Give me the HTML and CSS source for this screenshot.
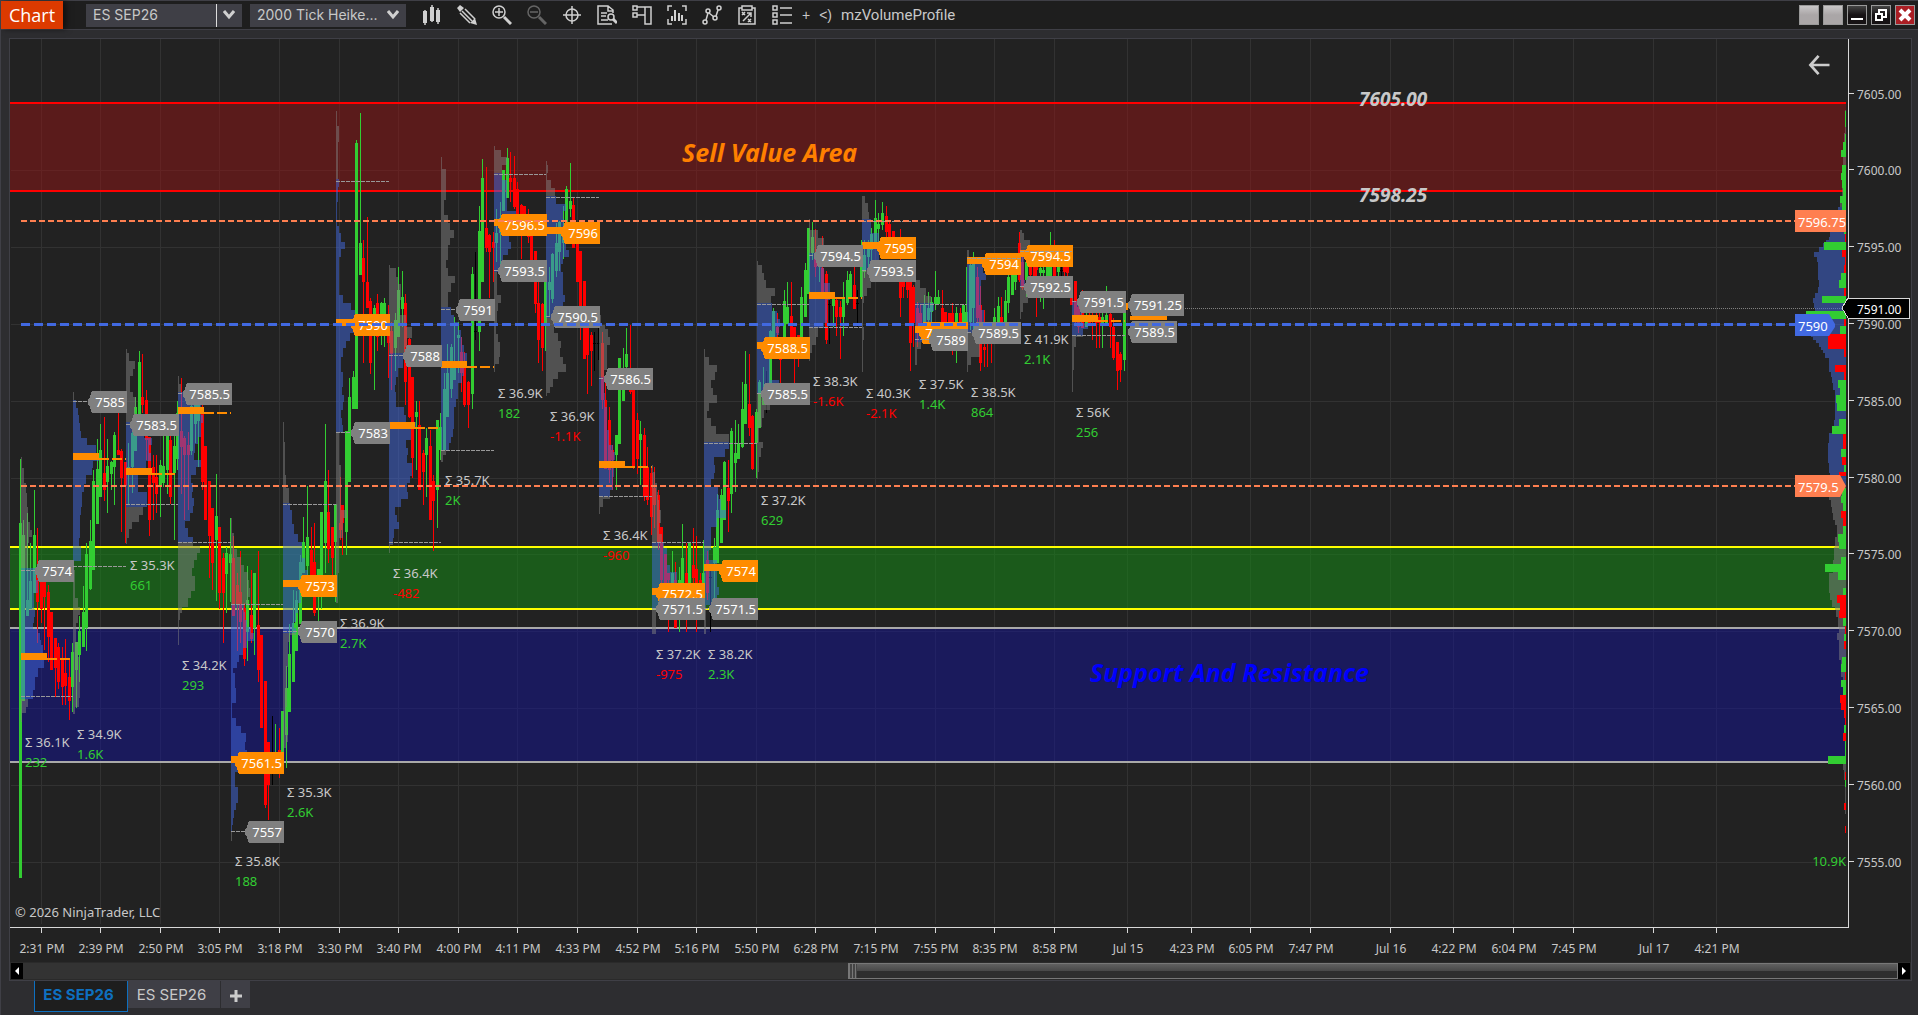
FILE: index.html
```html
<!DOCTYPE html>
<html lang="en">
<head>
<meta charset="utf-8">
<title>Chart - ES SEP26</title>
<link rel="stylesheet" href="styles.css">
</head>
<body>
<header class="bar">
  <h1 class="brand">Chart</h1>
  <div class="combo combo-split">
    <select aria-label="Instrument"><option>ES SEP26</option></select>
    <svg class="chev" viewBox="0 0 12 10"><path d="M1 1l5 6 5-6"/></svg>
  </div>
  <div class="combo">
    <select aria-label="Interval"><option>2000 Tick Heike...</option></select>
    <svg class="chev" viewBox="0 0 12 10"><path d="M1 1l5 6 5-6"/></svg>
  </div>
  <nav class="tools" aria-label="Chart tools">
    <button aria-label="Chart style"><svg viewBox="0 0 20 20"><path class="f" d="M1 6h4v12H1zM8 2h4v14H8zM14 5h4v12h-4z"/><path d="M3 5v15M10 0v17M16 3v16"/></svg></button>
    <button aria-label="Drawing tools"><svg viewBox="0 0 20 20"><path class="f" d="M3 0l4 3-4 4-3-4zM20 20l-7-2 5-5z"/><path d="M3 8l10 10M5 6l10 10M8 4l10 10"/></svg></button>
    <button aria-label="Zoom in"><svg viewBox="0 0 20 20"><circle cx="7" cy="7" r="6"/><path d="M7 3v8M3 7h8"/><path class="w" d="M12 12l7 7"/></svg></button>
    <button class="off" aria-label="Zoom out" disabled><svg viewBox="0 0 20 20"><circle cx="7" cy="7" r="6"/><path d="M3 7h8"/><path class="w" d="M12 12l7 7"/></svg></button>
    <button aria-label="Crosshair"><svg viewBox="0 0 20 20"><circle cx="10" cy="10" r="6"/><path d="M10 1v18M1 10h18"/></svg></button>
    <button aria-label="Data box"><svg viewBox="0 0 20 20"><path d="M15 19H1V1h10l5 4v3M11 1v5h5M4 8h6M4 11h5M4 15h7"/><circle cx="14" cy="12" r="3"/><path class="w" d="M16 14l4 4"/></svg></button>
    <button aria-label="Chart trader"><svg viewBox="0 0 20 20"><path d="M1 1h4v4H1zM1 8h4v4H1zM5 2h14v17h-6V2M5 10h8"/></svg></button>
    <button aria-label="Indicators"><svg viewBox="0 0 20 20"><path d="M1 6V1h4M15 1h4v5M1 14v5h4M15 19h4v-5"/><path class="b" d="M5 16v-5M8 16V5M12 16V8M15 16v-6"/></svg></button>
    <button aria-label="Strategies"><svg viewBox="0 0 20 20"><circle cx="3" cy="17" r="2"/><circle cx="6" cy="6" r="2"/><circle cx="13" cy="13" r="2"/><circle cx="17" cy="3" r="2"/><path d="M4 15l2-7M7 8l5 4M14 11l2-6"/></svg></button>
    <button aria-label="Properties"><svg viewBox="0 0 20 20"><path d="M5 3H2v16h16V3h-3M5 1h10v4H5zM5 7l3 3M8 7l-3 3M11 14l3 3M14 14l-3 3M6 16l8-8M10 8h4v4"/></svg></button>
    <button aria-label="Data series"><svg viewBox="0 0 20 20"><path d="M1 1h4v4H1zM1 8h4v4H1zM1 15h4v4H1zM8 3h12M8 10h12M8 18h12"/></svg></button>
  </nav>
  <div class="links">
    <button aria-label="Add">+</button>
    <button aria-label="Link">&lt;)</button>
    <button class="name">mzVolumeProfile</button>
  </div>
  <div class="win">
    <button class="blank" aria-label="Instrument link"></button>
    <button class="blank" aria-label="Interval link"></button>
    <button aria-label="Minimize"><svg viewBox="0 0 18 18"><path class="w" d="M3 13h12"/></svg></button>
    <button aria-label="Restore"><svg viewBox="0 0 18 18"><path class="w" d="M7 7V4h7v7h-3M4 8h6v6H4z"/></svg></button>
    <button class="close" aria-label="Close"><svg viewBox="0 0 18 18"><path class="x" d="M4 4l10 10M14 4L4 14"/></svg></button>
  </div>
</header>
<main class="frame">
  <section class="stage">
    <svg id="chart" role="img" aria-label="ES SEP26 volume profile chart"></svg>
    <button class="back" aria-label="Back"><svg viewBox="0 0 24 22"><path d="M23 11H2M11 1L2 11l9 10"/></svg></button>
  </section>
  <div class="scroll">
    <button aria-label="Scroll left"><svg viewBox="0 0 12 16"><path d="M8 4v8L4 8z"/></svg></button>
    <div class="track"><div class="thumb"></div></div>
    <button aria-label="Scroll right"><svg viewBox="0 0 12 16"><path d="M4 4v8l4-4z"/></svg></button>
  </div>
</main>
<footer class="tabs">
  <button class="tab on">ES SEP26</button>
  <button class="tab">ES SEP26</button>
  <button class="tab add" aria-label="New tab"><svg viewBox="0 0 14 14"><path d="M7 1v12M1 7h12"/></svg></button>
</footer>
<script src="chart.js"></script>
</body>
</html>
```
FILE: styles.css
```css
* { box-sizing: border-box; }
body {
  margin: 0;
  height: 100vh;
  display: flex;
  flex-direction: column;
  overflow: hidden;
  background: #2d2d30;
  border-left: 1px solid #3f3f46;
  color: #c8c8c8;
  font-family: "Noto Sans", "Open Sans", sans-serif;
}
button, select { font: inherit; color: inherit; border: 0; padding: 0; margin: 0; background: none; }

.bar {
  flex: none;
  display: flex;
  align-items: center;
  height: 30px;
  padding-right: 3px;
  background: #1e1e1e;
  border-top: 1px solid #3f3f46;
  border-bottom: 1px solid #3f3f46;
}
.brand {
  margin: 0 23px 0 0;
  width: 62px;
  line-height: 28px;
  text-align: center;
  background: #dc3a00;
  color: #fff;
  font-size: 18px;
  font-weight: 500;
  box-shadow: 3px 0 6px #0008;
  font-family: "Open Sans", sans-serif;
}
.combo {
  display: flex;
  align-items: center;
  position: relative;
  width: 156px;
  height: 23px;
  margin-right: 8px;
  background: #3f3f46;
}
.combo select {
  appearance: none;
  width: 100%;
  height: 23px;
  padding: 0 26px 1px 7px;
  font-family: Inter, sans-serif;
  font-size: 14px;
}
.combo-split::after {
  content: "";
  position: absolute;
  right: 25px;
  width: 1px;
  height: 23px;
  background: #ddd;
}
.chev { position: absolute; right: 7px; width: 12px; height: 10px; pointer-events: none; }
.chev path { fill: none; stroke: #d0d0d0; stroke-width: 3; }
.tools { display: flex; align-items: center; gap: 15px; margin-left: 8px; }
.tools button { width: 20px; height: 22px; }
.tools svg { display: block; width: 20px; height: 20px; }
.tools path, .tools circle { fill: none; stroke: #d0d0d0; stroke-width: 1.5; }
.tools .f { fill: #d0d0d0; stroke: none; }
.tools .w { stroke-width: 3; }
.tools .b { stroke-width: 2; }
.tools .off { opacity: .4; }
.links { display: flex; align-items: center; gap: 9px; margin-left: 10px; font: 14px "Liberation Sans", sans-serif; }
.links .name { font: 15px Roboto, sans-serif; }
.win { display: flex; gap: 4px; margin-left: auto; }
.win button {
  width: 20px;
  height: 20px;
  border: 1px solid #999;
  background: linear-gradient(#444, #161214 50%);
}
.win .blank { background: linear-gradient(#c8c6c7, #aaa6a7 50%); }
.win .close { background: #aa1e24; }
.win svg { display: block; width: 18px; height: 18px; }
.win path { fill: none; stroke: #fff; }
.win .w { stroke-width: 2; }
.win .x { stroke-width: 4; }

.frame {
  flex: 1;
  min-height: 0;
  display: flex;
  flex-direction: column;
  margin: 8px 6px 0 8px;
  border: 1px solid #3f3f46;
}
.stage { flex: 1; min-height: 0; position: relative; background: #222; }
#chart { display: block; width: 100%; height: 100%; }
.back { position: absolute; top: 16px; right: 80px; width: 23px; height: 20px; }
.back svg { display: block; width: 23px; height: 20px; }
.back path { fill: none; stroke: #ccc; stroke-width: 3; }

.scroll { display: flex; height: 18px; padding: 1px; background: #2a2a2a; }
.scroll button { width: 12px; height: 16px; background: #000; }
.scroll svg { display: block; width: 12px; height: 16px; fill: #fff; }
.track { flex: 1; display: flex; background: #333; }
.thumb {
  width: 56%;
  margin-left: auto;
  border: 1px solid #777;
  background: repeating-linear-gradient(90deg, #777 0 1px, #444 1px 3px) left / 8px 100% no-repeat, linear-gradient(#606060, #484848 50%, #2e2e2e 50%);
}

.tabs { flex: none; display: flex; align-items: flex-start; height: 34px; padding-left: 33px; }
.tab {
  width: 92px;
  height: 27px;
  padding-right: 5px;
  margin-right: 1px;
  background: #3f3f46;
  font-family: Inter, sans-serif;
  font-size: 15px;
}
.tab.on {
  width: 94px;
  height: 31px;
  padding-bottom: 4px;
  margin-right: 0;
  border: 1px solid #0e70c0;
  border-top: 0;
  background: #1e1e1e;
  color: #0e70c0;
  font-weight: 700;
}
.tab.add { width: 29px; padding: 0; }
.tab.add svg { width: 14px; height: 14px; vertical-align: middle; }
.tab.add path { stroke: #ccc; stroke-width: 3; }

.shape { shape-rendering: crispEdges; }
.axis { stroke: #d8d8d8; fill: none; }
.txt, .price { font-size: 12px; fill: #c8c8c8; }
.sum { font-size: 13px; fill: #c8c8c8; }
.tag { font-size: 13px; fill: #fff; }
.up { fill: #32cd32; }
.down { fill: #ff0000; }
.now { fill: #fff; }
.note { font-weight: 700; font-style: italic; }
.note-l { font-size: 25px; }
.note-s { font-size: 19px; fill: #c8c8c8; }
```
FILE: chart.js
```js
// Samples are stored in thirds of a pixel, relative to each group's origin.
const candleGroups = [
  { ox: 0, oy: 340, d: `61 g 357 1613 549 1613;71 g 540 1083 585 1083;82 g 520 828 780 828;91 g 610 808 723 808;103 g 450 760 585 760;112 r 563 908 700 785;124 r 700 850 718 808;133 r 718 930 720 770;145 r 735 965 757 890;154 r 815 990 815 990;166 r 893 1070 893 985;176 r 908 1048 920 1025;187 r 920 1095 960 1040;196 r 897 1095 1000 1037;208 r 960 1140 1010 1083;217 g 908 1115 935 1040;229 g 905 1105 905 990;238 g 828 1025 873 945;250 g 738 920 815 920;259 g 610 933 642 863;271 g 540 750 603 748;280 g 390 690 422 690;292 g 297 553 388 553;301 g 252 472 330 470;313 r 232 482 398 450;322 g 298 520 377 427;334 g 362 450 365 402;343 g 275 495 285 382;355 r 215 345 330 345;364 r 328 575 332 413;377 r 365 608 365 437;386 g 310 495 380 400;397 g 250 460 280 380;406 g 172 333 200 333;418 g 32 250 66 250;427 r 43 220 172 195;439 r 150 360 180 300;448 r 290 588 290 540;460 r 345 540 380 430;469 r 345 518 410 463;481 g 360 530 375 437;490 g 285 440 378 430;502 g 285 463 285 390;511 r 285 493 300 470;523 g 283 600 318 400;532 g 182 390 218 357;544 r 113 463 272 322;553 r 287 540 295 345;565 r 275 510 315 345;574 g 190 345 197 333;586 g 190 310 195 252;595 g 190 380 195 243;606 r 195 450 215 425;616 r 318 540 318 540;628 r 423 715 423 588;637 r 505 750 505 668;649 g 402 783 528 600;658 r 562 808 562 758;670 r 640 908 655 758;679 g 622 818 640 703;691 g 535 785 642 668;700 r 588 827 655 827;711 r 700 933 735 795;721 r 632 908 755 845;733 r 790 978 803 958;742 g 678 963 780 877;754 r 690 908 825 898;763 g 698 945 698 865;775 r 632 1025 855 990;784 r 885 1163 885 1163;796 r 1023 1403 1023 1395;805 r 1205 1440 1205 1335;817 k 1128 1335 1300 1303;826 g 1153 1303 1250 1253;838 r 1163 1313 1230 1240;847 g 1113 1235 1113 1235;859 g 978 1285 1045 1185;868 g 852 1115 942 1115;880 g 750 1025 848 1025;889 g 753 933 780 933;901 g 645 853 667 853;910 g 532 700 605 700;922 g 438 715 590 678;934 r 562 715 630 705;943 r 550 827 665 820;955 g 687 843 687 705;964 g 515 808 515 705;976 g 252 700 423 610;985 r 390 670 515 628;997 r 560 710 562 655;1006 g 492 785 492 605;1021 r 412 600 550 570;1028 r 495 645 495 550` },
  { ox: 320, oy: 90, d: `79 g 1022 1395 1022 1325;88 g 865 1175 920 1175;100 g 843 957 860 957;109 g 150 957 158 957;121 g 68 555 458 555;130 r 450 820 503 577;142 r 380 655 577 655;151 r 625 852 632 820;163 g 645 900 655 700;172 r 612 783 640 740;184 g 635 765 640 700;193 g 625 770 640 690;205 r 645 865 700 760;214 r 695 900 723 793;226 g 670 843 690 775;235 g 530 740 600 740;247 g 543 710 622 657;256 r 612 945 640 875;268 r 745 985 747 980;277 r 860 1165 860 1105;289 g 933 1140 965 980;298 r 933 1200 1005 1200;310 r 1080 1245 1090 1147;319 g 1015 1220 1045 1095;331 r 1020 1290 1068 1290;340 r 1155 1383 1173 1233;352 g 990 1315 990 1200;361 g 970 1110 1010 1080;373 g 848 1080 897 1080;382 g 763 980 850 980;394 g 763 925 770 897;403 g 680 870 825 870;415 g 695 850 735 745;424 r 740 905 785 850;433 r 785 950 820 945;445 r 872 1013 875 945;457 g 530 957 552 912;466 k 487 750 722 725;478 g 347 783 423 725;487 g 207 577 263 577;499 r 232 485 413 473;508 r 433 625 435 485;520 r 427 577 457 475;529 g 357 517 430 460;541 g 335 540 385 430;550 g 240 362 240 362;562 g 173 325 203 325;571 r 187 335 263 277;583 r 198 357 265 350;592 r 275 375 297 375;604 r 342 507 345 375;613 r 347 375 347 375;625 r 357 460 375 440;634 r 432 530 432 530;647 r 483 668 483 642;655 r 575 820 640 750;667 r 640 843 642 773;676 g 575 783 575 703;688 g 530 680 575 600;697 g 490 638 492 628;709 g 400 560 460 543;718 g 393 543 395 487;730 g 348 508 425 460;739 g 288 397 298 397;751 g 218 380 333 357;760 r 323 475 345 475;772 r 460 577 460 577;781 r 483 750 483 648;793 r 573 808 573 808;802 r 715 912 715 795;814 r 727 888 735 782;823 k 727 843 760 763;835 k 713 810 760 763` },
  { ox: 600, oy: 200, d: `7 r 397 627 430 600;17 r 530 808 600 808;28 r 620 850 660 810;38 r 735 870 750 780;49 g 705 870 705 765;58 g 473 733 473 733;70 g 443 602 565 602;79 g 383 570 462 500;91 r 375 582 570 575;100 r 565 808 567 800;112 r 640 822 660 778;121 g 663 855 703 720;133 r 683 900 705 890;142 r 742 900 800 900;373 g 787 940 787 940;385 r 790 930 880 900;394 g 690 940 693 883;406 g 660 845 763 790;415 g 672 778 730 778;427 g 545 745 628 740;436 g 452 673 553 673;448 r 463 708 612 685;457 r 645 810 648 808;469 g 627 835 635 730;478 g 540 685 545 685;490 g 500 615 585 615;499 k 513 638 600 603;511 g 390 550 393 550;520 g 325 415 333 415;532 r 338 415 380 400;541 r 475 550 475 480;553 g 270 412 303 412;562 g 245 372 322 372;574 r 245 412 348 412;583 r 380 550 380 412;595 r 405 500 405 412;604 g 262 412 290 412;616 g 190 350 210 350;625 g 83 282 83 282;637 g 65 180 110 160;646 r 87 230 160 200;658 g 160 245 190 200;667 r 107 275 205 275;679 r 213 432 223 420;688 k 300 432 312 315;700 g 290 380 298 318;709 r 293 408 300 352;721 r 303 478 322 352;730 g 245 408 297 352;742 g 213 315 240 310;751 g 213 292 223 292;763 r 200 327 255 327;772 k 270 380 310 313;784 g 120 290 195 290;793 g 120 235 165 215;805 g 120 210 130 170;814 g 85 190 103 150;826 g 0 130 55 130;835 g 38 130 72 88;847 g 5 90 38 75;859 r 17 112 48 95;868 r 62 112 72 112;880 r 92 112 92 112;901 r 87 350 245 293;911 r 240 293 240 260;922 r 240 293 245 270;931 r 240 513 240 430` },
  { ox: 280, oy: 440, d: `1093 r -15 182 -15 167;1103 r 20 195 80 168;1115 r 80 285 100 230;1124 r 80 263 145 195;1135 r 150 330 165 310;1144 r 262 430 262 420;1156 r 343 430 343 430;1165 r 400 575 400 420;1177 g 332 430 400 430;1187 r 365 565 420 563;1198 g 382 577 420 430;1207 g 252 430 353 430;1219 r 308 575 400 430;1228 g 307 430 307 430;1240 r 263 430 375 415;1249 r 288 575 388 430;1261 r 400 480 420 450;1270 g 300 480 400 430;1282 r 333 480 360 460;1291 k 390 577 410 413;1303 g 293 480 320 370;1312 g 163 370 210 370;1324 g 148 310 165 310;1333 g 63 240 67 240;1345 r 60 277 145 183;1354 g -35 220 0 163;1366 g -60 155 40 70` },
  { ox: 780, oy: 180, d: `400 r 315 500 320 430;412 r 365 500 385 440;421 r 375 450 400 440;433 g 345 430 375 430;445 g 335 430 385 420;454 g 350 425 367 397;466 g 272 390 350 373;475 g 330 373 350 373;487 r 330 425 385 425;496 r 395 425 395 425;508 r 400 425 400 425;517 r 368 525 400 425;529 g 380 548 400 425;541 r 385 425 400 425;550 g 375 425 375 425;559 g 260 430 395 430;571 g 250 450 255 425;580 g 215 450 240 385;592 r 262 460 290 415;601 r 318 573 375 550;613 r 390 560 500 510;622 r 480 560 480 490;634 r 488 548 488 490;643 g 385 425 410 425;655 g 350 425 378 425;665 r 350 425 410 425;676 g 330 425 362 425;685 g 280 400 290 370;697 g 278 345 278 345;707 g 275 330 280 307;718 r 155 305 190 300;727 r 230 330 245 325;739 g 225 350 245 300;751 r 240 330 260 285;763 r 230 295 250 290;769 r 255 410 260 270;781 g 255 365 265 280;790 g 255 388 270 280;802 g 255 350 260 290;811 g 155 350 258 290;823 r 180 330 258 290;835 g 240 290 258 275;844 k 250 300 270 273;853 r 240 300 258 275;862 r 250 290 255 280;874 r 350 375 350 375;886 r 302 430 302 420;895 r 360 460 380 440;907 r 330 445 365 445;918 g 395 440 405 440;928 r 395 430 405 430;937 r 390 480 405 420;949 r 400 505 405 430;958 r 400 503 410 430;968 g 395 503 410 430;979 g 318 430 405 430;991 r 395 503 403 440;1000 r 415 540 440 535;1012 r 485 630 487 573;1021 r 515 605 523 570;1033 g 390 573 395 540` }
];

// Volume profiles: origin, left edge, value area (top, bottom), then y,width steps and a closing y.
const profiles = [
  [0, 340, 64, 685, 1077, [350,3,383,10,430,14,460,18,500,22,545,28,570,32,590,25,610,20,685,46,720,50,760,40,808,42,830,38,850,36,868,50,880,56,900,60,915,66,955,68,985,50,1010,42,1050,36,1077,22,1100,15,1120,4,1145]],
  [0, 340, 220, 179, 662, [157,3,179,10,205,14,225,17,248,20,272,25,293,42,315,68,338,78,362,60,385,56,405,40,432,33,455,27,480,28,502,25,525,20,548,22,572,20,595,18,617,24,662,4,690,5,710,6,775,15,800,22,825,16,850,10,905,15,950,18,1000,22,1075,18,1100,6,1122]],
  [0, 340, 379, 245, 500, [27,3,38,10,62,26,86,22,108,13,157,22,172,30,200,28,245,55,295,77,315,68,340,74,363,60,385,36,455,62,500,52,525,40,545,18,568,10,595,3,613]],
  [0, 340, 535, 155, 607, [108,3,132,10,155,30,190,70,225,75,248,70,292,60,312,52,340,48,360,70,382,55,405,40,430,45,455,42,475,48,497,44,520,37,542,22,565,30,590,45,617,66,638,58,660,47,685,42,707,52,730,50,752,38,775,30,800,12,820,6,840,3,915]],
  [0, 340, 694, 793, 1472, [533,3,580,10,627,18,650,30,675,40,697,52,720,55,745,58,770,50,793,40,815,42,840,47,862,60,880,68,903,48,925,36,945,25,965,18,985,6,1000,12,1045,14,1090,3,1135,15,1158,30,1180,45,1205,42,1230,48,1260,40,1297,12,1340,22,1365,20,1390,15,1410,10,1435,5,1455,3,1503]],
  [0, 340, 850, 490, 880, [245,3,305,5,405,10,445,18,490,22,510,26,552,33,582,45,605,56,655,65,690,75,720,50,765,55,790,45,820,38,845,32,865,40,885,20,905,14,980,12,1100,10,1160,12,1185,15,1205,10,1225,4,1270]],
  [320, 90, 49, 268, 1025, [63,3,108,8,132,10,155,5,268,8,292,5,335,4,385,3,408,10,430,16,455,26,478,14,502,10,615,22,638,46,660,58,730,42,752,30,775,20,800,14,845,20,870,22,890,18,915,24,935,20,960,14,983,18,1005,20,1030,8,1125,14,1210,16,1260,34,1285,20,1345,10,1450,6,1540]],
  [320, 90, 208, 790, 1362, [525,3,535,22,560,28,582,36,630,32,655,30,675,50,710,68,745,55,770,48,790,42,835,28,860,22,885,17,905,20,950,45,975,50,995,80,1018,66,1050,52,1075,58,1095,55,1120,68,1158,62,1180,55,1205,57,1227,36,1250,18,1275,24,1295,30,1318,15,1345,12,1365,3,1390]],
  [320, 90, 364, 652, 1081, [200,3,237,14,330,10,375,20,398,28,420,40,443,28,465,20,510,15,535,22,557,43,580,30,605,22,630,20,652,30,675,40,697,52,720,60,740,62,765,70,790,78,812,70,857,62,880,52,905,50,927,45,950,40,975,38,1018,35,1040,30,1060,25,1080,14,1095,5,1115]],
  [320, 90, 523, 249, 545, [168,3,180,20,202,40,225,25,270,40,362,65,430,45,455,52,477,42,495,28,545,8,615,20,638,12,663,10,708,5,732,12,755,18,800,14,823,3,846]],
  [320, 90, 679, 317, 684, [213,3,225,6,248,3,270,14,293,26,317,30,342,60,362,50,387,54,460,60,480,70,500,52,522,45,545,50,570,52,615,56,637,50,660,38,680,28,705,25,730,35,752,45,775,42,800,52,823,60,845,35,868,22,890,12,910,3,917]],
  [600, 200, -3, 530, 890, [345,6,375,19,388,27,410,33,435,25,460,23,510,15,580,17,620,23,690,31,735,41,755,47,780,45,830,43,870,33,897,11,920,4,943]],
  [280, 440, 1117, 305, 510, [75,3,95,10,130,14,155,18,180,22,210,26,250,20,283,30,305,36,325,45,375,55,395,75,470,60,510,12,582]],
  [600, 200, 313, 727, 1222, [447,3,470,14,495,40,517,32,540,20,563,26,585,40,608,14,632,10,655,22,678,35,702,75,748,62,770,30,795,32,820,30,838,22,862,42,885,45,898,50,930,66,955,40,980,20,1050,14,1080,40,1160,46,1185,38,1215,5,1302]],
  [600, 200, 471, 308, 580, [183,3,195,14,218,20,240,26,263,53,287,42,308,45,332,60,357,68,382,65,405,60,475,40,540,66,550,40,585,38,630,22,655,14,680,5,727,17,745,12,770,5,815,4,838]],
  [600, 200, 628, 160, 385, [57,3,90,26,113,44,160,40,205,45,250,62,300,55,370,45,385,28,410,20,435,10,460,3,483]],
  [780, 180, 247, 117, 270, [48,8,70,18,95,22,117,28,160,50,270,26,325,15,348,6,370,3,440,5,480,3,575]],
  [780, 180, 406, 370, 485, [270,3,300,14,325,32,348,48,370,56,392,50,485,18,508,5,555]],
  [780, 180, 562, 232, 460, [210,5,232,45,258,48,278,56,300,42,390,50,460,40,530,12,555,3,575]],
  [780, 180, 720, 213, 318, [150,5,160,12,180,30,205,30,215,12,300,15,320,30,348,24,370,10,395,3,417]],
  [780, 180, 877, 362, 468, [350,4,362,20,385,30,430,48,448,32,470,12,500,5,570,3,635]]
];

// Session starts, shared by tags, value-area lines and volume totals.
const starts = [21,73,126,178,231,283,336,389,441,494,546,599,652,704,757,809,862,915,967,1020,1072,1125];
// [y, dashed tail y or 0] of each session's point of control
const poc = [[653,659],[453,459],[468,474],[407,413],[756,0],[580,0],[319,0],[422,428],[361,367],[219,0],[227,0],[461,467],[588,0],[564,0],[342,0],[292,298],[242,0],[326,0],[257,0],[250,0],[315,321]];
const vaLines = [696,566,504,542,604,504,181,542,450,174,197,496,542,443,304,327,221,304,258,251,335];
// [session, price, highlighted]
const tags = [[0,7574],[1,7585],[2,7583.5],[3,7585.5],[4,7561.5,1],[4,7557],[5,7573,1],[5,7570],[6,7590,1],[6,7583],[7,7588],[8,7591],[9,7596.5,1],[9,7593.5],[10,7596,1],[10,7590.5],[11,7586.5],[12,7572.5,1],[12,7571.5],[13,7574,1],[13,7571.5],[14,7588.5,1],[14,7585.5],[15,7594.5],[16,7595,1],[16,7593.5],[17,7589.5,1],[17,7589],[18,7594,1],[18,7589.5],[19,7594.5,1],[19,7592.5],[20,7591.5]];
const sums = [[747,'36.1K','232'],[739,'34.9K','1.6K'],[570,'35.3K','661'],[670,'34.2K','293'],[866,'35.8K','188'],[797,'35.3K','2.6K'],[628,'36.9K','2.7K'],[578,'36.4K','-482'],[485,'35.7K','2K'],[398,'36.9K','182'],[421,'36.9K','-1.1K'],[540,'36.4K','-960'],[659,'37.2K','-975'],[659,'38.2K','2.3K'],[505,'37.2K','629'],[386,'38.3K','-1.6K'],[398,'40.3K','-2.1K'],[389,'37.5K','1.4K'],[397,'38.5K','864'],[344,'41.9K','2.1K'],[417,'56K','256']];
const times = [[41,'2:31 PM'],[100,'2:39 PM'],[160,'2:50 PM'],[219,'3:05 PM'],[279,'3:18 PM'],[339,'3:30 PM'],[398,'3:40 PM'],[458,'4:00 PM'],[517,'4:11 PM'],[577,'4:33 PM'],[637,'4:52 PM'],[696,'5:16 PM'],[756,'5:50 PM'],[815,'6:28 PM'],[875,'7:15 PM'],[935,'7:55 PM'],[994,'8:35 PM'],[1054,'8:58 PM'],[1127,'Jul 15'],[1191,'4:23 PM'],[1250,'6:05 PM'],[1310,'7:47 PM'],[1390,'Jul 16'],[1453,'4:22 PM'],[1513,'6:04 PM'],[1573,'7:45 PM'],[1653,'Jul 17'],[1716,'4:21 PM']];

// Composite profile at the right edge: y,width steps, then delta bars.
const composite = [150,3,220,5,290,8,385,12,415,18,440,24,515,48,530,52,540,60,550,70,560,80,575,95,590,88,605,84,660,80,680,84,700,92,715,98,730,96,745,94,755,105,775,112,800,105,830,98,840,90,850,82,860,75,870,68,880,62,895,52,920,50,935,46,950,42,970,38,990,34,1040,32,1080,36,1100,42,1120,50,1150,54,1210,52,1240,48,1278,50,1320,46,1340,42,1360,38,1380,32,1395,28,1430,32,1460,36,1500,40,1540,50,1600,48,1620,42,1640,34,1650,30,1670,25,1700,22,1720,26,1740,22,1760,20,1800,15,1850,10,1930,3,2080,3,2110,8,2130,5,2160,3,2262];
const deltas = `153 200 3 g;222 246 3 g;246 270 9 g;270 290 14 g;315 340 12 g;340 360 14 g;360 385 12 g;385 408 10 g;408 430 17 g;430 450 12 g;516 523 5 g;523 546 3 r;546 569 66 g;569 591 12 r;591 615 2 r;615 640 6 r;640 660 15 g;660 684 20 g;684 708 6 r;708 728 72 g;753 776 120 g;776 798 6 r;798 822 18 g;822 867 54 r;867 890 6 r;915 936 33 r;936 960 5 r;960 983 24 g;983 1006 18 g;1006 1030 30 g;1030 1053 27 g;1077 1098 20 g;1098 1121 42 g;1121 1167 9 r;1167 1190 15 g;1190 1215 12 r;1215 1236 6 g;1236 1247 20 r;1285 1307 12 g;1307 1330 15 g;1330 1352 9 g;1352 1373 15 r;1373 1398 9 r;1398 1422 9 g;1422 1445 24 g;1445 1467 21 g;1491 1512 15 g;1512 1535 63 g;1535 1560 24 g;1585 1605 9 g;1605 1628 27 r;1628 1652 18 r;1652 1674 21 r;1674 1698 8 g;1698 1722 3 r;1722 1743 6 g;1743 1767 6 r;1790 1812 12 g;1812 1835 15 g;1835 1860 3 r;1860 1880 15 g;1880 1905 8 g;1905 1928 18 r;1928 1950 15 r;1950 1974 6 r;1974 1996 3 r;1996 2020 6 g;2020 2043 9 r;2043 2088 3 g;2088 2112 54 g;2136 2160 3 r;2160 2182 3 g;2228 2250 6 r;2298 2320 3 r`;

const LEFT = 10, TOP = 39;
const colors = { g: '#32cd32', r: '#ff0000', k: '#000' };
const priceY = p => Math.round(93.6 + (7605 - p) * 15.36);
const rect = (x, y, w, h, f, extra = '') => `<rect class="shape" x="${x}" y="${y}" width="${w}" height="${h}" fill="${f}" ${extra}/>`;
const line = (x1, y1, x2, y2, s, w = 1, extra = '') => {
  const o = w % 2 / 2, v = x1 === x2;
  return `<line class="shape" x1="${v ? x1 + o : x1}" y1="${v ? y1 : y1 + o}" x2="${v ? x2 + o : x2}" y2="${v ? y2 : y2 + o}" stroke="${s}" stroke-width="${w}" ${extra}/>`;
};
const text = (x, y, t, cls, extra = '') => `<text x="${x}" y="${y}" class="${cls}" ${extra}>${t}</text>`;
const dash = d => `stroke-dasharray="${d}"`;

function tag(right, y, label, fill) {
  const w = label.length < 5 ? 35 : label.length < 7 ? 45 : 52, x = right - w;
  return `<path class="shape" fill="${fill}" d="M${x} ${y - 11}H${right}V${y + 11}H${x}l-2-6-2-3v-4l2-3z"/>` +
    text(right - 2, y + 5, label, 'tag', 'text-anchor="end"');
}

function draw() {
  const svg = document.getElementById('chart');
  const axisX = LEFT + svg.clientWidth - 63, axisY = TOP + svg.clientHeight - 35, edge = axisX - 2;
  let s = '';
  for (const [x] of times) s += line(x, TOP, x, axisY - 3, '#323232');
  for (let p = 7600; p >= 7555; p -= 5) s += line(11, priceY(p), edge, priceY(p), '#323232');

  s += rect(10, 103, edge - 10, 88, '#921414', 'opacity=".5"') + line(10, 103, edge, 103, '#f00', 2) + line(10, 191, edge, 191, '#f00', 2);
  s += rect(10, 548, edge - 10, 61, '#148c14', 'opacity=".53"') + line(10, 547, edge, 547, '#ff0', 2) + line(10, 609, edge, 609, '#ff0', 2);
  s += rect(10, 629, edge - 10, 133, '#141492', 'opacity=".52"') + line(10, 628, edge, 628, '#a9a9a9', 2) + line(10, 762, edge, 762, '#a9a9a9', 2);

  for (const g of candleGroups) for (const row of g.d.split(';')) {
    const [x, c, a, b, t, u] = row.split(' ');
    const px = g.ox + Math.floor(x / 3), at = v => g.oy + Math.round(v / 3);
    s += rect(px, at(a), 1, at(b) - at(a), colors[c]) + rect(px - 1, at(t), 3, Math.max(1, at(u) - at(t)), colors[c]);
  }
  for (const [ox, oy, x, va, vb, st] of profiles) {
    const base = ox + Math.round(x / 3), va1 = oy + Math.round(va / 3), vb1 = oy + Math.round(vb / 3);
    for (let i = 0; i + 2 < st.length; i += 2) {
      const y1 = oy + Math.round(st[i] / 3), y2 = oy + Math.round(st[i + 2] / 3), w = Math.round(st[i + 1] / 3);
      const cuts = [y1, ...[va1, vb1].filter(v => v > y1 && v < y2), y2];
      for (let k = 0; k + 1 < cuts.length; k++)
        s += rect(base, cuts[k], w, cuts[k + 1] - cuts[k], cuts[k] >= va1 && cuts[k] < vb1 ? '#4169e1' : '#808080', 'opacity=".5"');
    }
  }
  poc.forEach(([y, tail], i) => {
    s += rect(starts[i], y, 26, 7, '#ff8c00');
    if (tail) s += line(starts[i] + 26, tail, starts[i + 1], tail, '#ff8c00', 2, dash('10 3'));
  });
  s += rect(1125, 303, 3, 7, '#ff8c00') + rect(1130, 316, 37, 4, '#ff8c00');
  for (const [i, p, hot] of tags) {
    const y = priceY(p);
    if (!hot) s += line(starts[i], y, starts[i + 1] - 36, y, '#999', 1, dash('4 1'));
    s += tag(starts[i + 1] + 1, y + 1, String(p), hot ? '#ff8c00' : '#808080');
  }
  s += tag(1184, 305, '7591.25', '#808080') + tag(1177, 332, '7589.5', '#808080');
  vaLines.forEach((y, i) => { s += line(starts[i], y, starts[i + 1], y, '#999', 1, dash('4 1')); });
  sums.forEach(([y, a, b], i) => {
    s += text(starts[i] + 4, y, 'Σ ' + a, 'sum') + text(starts[i] + 4, y + 20, b, b[0] === '-' ? 'sum down' : 'sum up');
  });

  s += line(21, 221, edge - 51, 221, '#ff7f50', 2, dash('6 3')) + line(21, 486, edge - 51, 486, '#ff7f50', 2, dash('6 3'));
  s += line(1185, 308, edge, 308, '#808080', 1, dash('1 1'));
  s += line(21, 324, edge - 51, 324, '#4169e1', 3, dash('9 4'));

  for (let i = 0; i + 2 < composite.length; i += 2) {
    const y1 = 60 + Math.round(composite[i] / 3), y2 = 60 + Math.round(composite[i + 2] / 3), w = Math.round(composite[i + 1] / 3);
    const inVa = composite[i] >= 440 && composite[i] < 1278;
    s += rect(edge - w, y1, w, y2 - y1, inVa ? '#4169e1' : '#808080', 'opacity=".5"');
  }
  for (const row of deltas.split(';')) {
    const [a, b, w, c] = row.split(' '), y1 = 60 + Math.round(a / 3), y2 = 60 + Math.round(b / 3), pw = Math.max(1, Math.round(w / 3));
    s += rect(edge - pw, y1, pw, y2 - y1, colors[c]);
  }
  const L = edge - 51;
  s += rect(L, 210, 51, 22, '#ff7f50') + text(L + 3, 227, '7596.75', 'tag');
  s += `<path fill="#4169e1" d="M${L} 314h34l6 10v3l-6 9h-34z"/>` + text(L + 3, 331, '7590', 'tag');
  s += `<path fill="#ff7f50" d="M${L} 475h45l6 11-6 11h-45z"/>` + text(L + 3, 492, '7579.5', 'tag');
  s += text(edge, 866, '10.9K', 'sum up', 'text-anchor="end"');

  s += text(682, 162, 'Sell Value Area', 'note note-l', 'fill="#ff8000"');
  s += text(1090, 682, 'Support And Resistance', 'note note-l', 'fill="#0000ff"');
  s += text(1359, 106, '7605.00', 'note note-s') + text(1359, 202, '7598.25', 'note note-s');
  s += text(15, 917, '© 2026 NinjaTrader, LLC', 'sum');

  s += `<path class="axis shape" d="M${axisX + .5} ${TOP}V${axisY + .5}H10"/>`;
  for (let p = 7605; p >= 7555; p -= 5) {
    const y = priceY(p);
    s += line(axisX, y - 1, axisX + 6, y - 1, '#d8d8d8') + text(axisX + 9, y + 5, p + '.00', 'price');
  }
  for (const [x, t] of times) s += line(x, axisY, x, axisY + 6, '#d8d8d8') + text(x + 1, axisY + 26, t, 'txt', 'text-anchor="middle"');
  s += `<path class="shape" fill="#000" stroke="#d8d8d8" d="M${axisX - 6} 308l6-10h61v20h-61z"/>` + text(axisX + 9, 314, '7591.00', 'price now');
  svg.innerHTML = `<g transform="translate(${-LEFT} ${-TOP})">${s}</g>`;
}
draw();
addEventListener('resize', draw);
```
